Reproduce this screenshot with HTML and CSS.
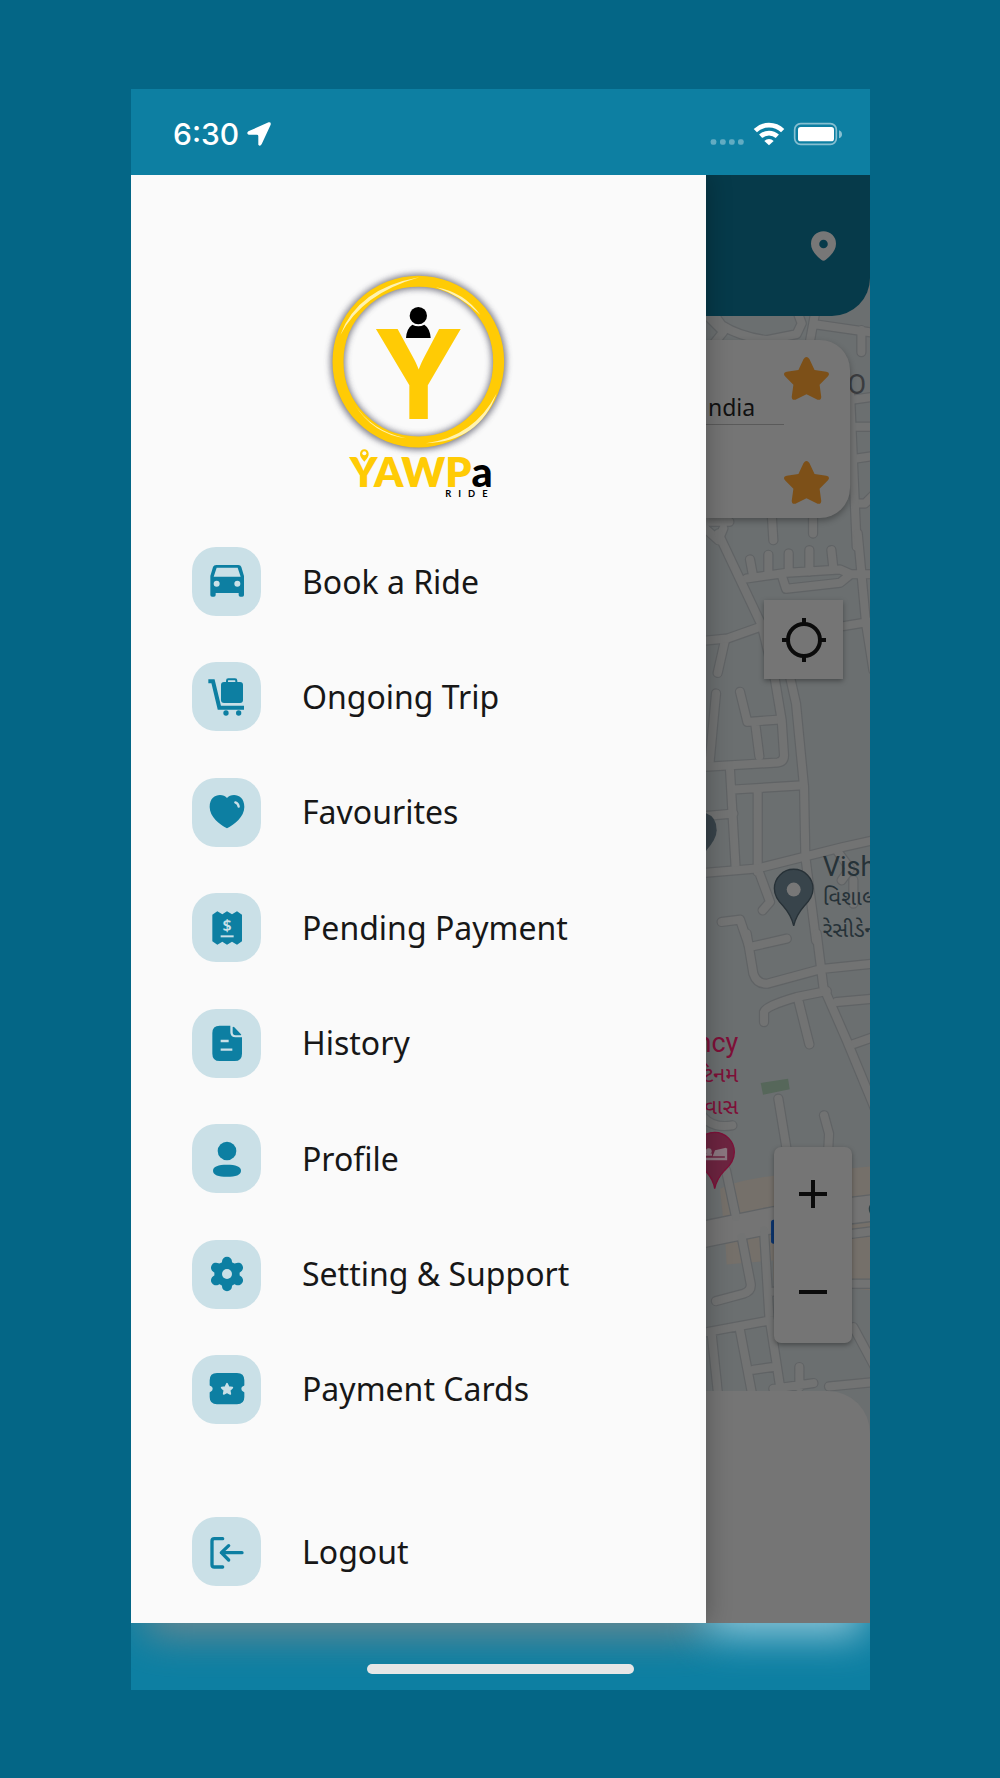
FILE: index.html
```html
<!DOCTYPE html>
<html lang="en">
<head>
  <meta charset="UTF-8">
  <meta name="viewport" content="width=device-width, initial-scale=1">
  <title>YAWPa Ride - Menu</title>
  <link rel="stylesheet" href="styles.css">
</head>
<body>
  <div class="phone">
    <!-- Status bar -->
    <header class="status-bar">
      <span class="time">6:30</span>
      <svg class="location-arrow" viewBox="0 0 70 70"><path d="M63 1 Q71 0 69 8 L43 64 Q38 73 33 66 V41 Q33 37 29 37 H5 Q-3 33 4 27 Z"/></svg>
      <svg class="status-icons" viewBox="0 0 396 72">
        <g opacity=".35">
          <rect x="2" y="52" width="17" height="16" rx="6"/><rect x="30" y="52" width="17" height="16" rx="6"/>
          <rect x="57" y="52" width="17" height="16" rx="6"/><rect x="84" y="52" width="17" height="16" rx="6"/>
        </g>
        <path d="M136 26 A59 59 0 0 1 218 26 M152 43 A37 37 0 0 1 202 43" fill="none" stroke="#fff" stroke-width="14"/>
        <path d="M177 70 L163 57 A20 20 0 0 1 191 57 Z"/>
        <rect x="254" y="5" width="125" height="62" rx="18" fill="none" stroke="#fff" stroke-width="5" opacity=".5"/>
        <rect x="264" y="15" width="108" height="43" rx="8"/>
        <path d="M387 25 Q396 28 396 37 Q396 46 387 49 Z" opacity=".5"/>
      </svg>
    </header>

    <main class="screen">
      <!-- Side menu -->
      <nav class="drawer">
        <svg class="logo" viewBox="9 0 630 750" role="img" aria-label="YAWPa Ride">
          <defs>
            <filter id="soft" x="-20%" y="-20%" width="140%" height="140%"><feGaussianBlur stdDeviation="9"/></filter>
          </defs>
          <circle cx="322" cy="306" r="242" fill="none" stroke="#4a4a58" stroke-width="44" opacity=".7" filter="url(#soft)"/>
          <circle cx="322" cy="305" r="241" fill="none" stroke="#ffcb05" stroke-width="33"/>
          <path d="M88 225 Q140 85 325 52 Q155 100 88 225Z M375 82 Q460 97 508 165 Q450 107 375 82Z M130 432 Q180 512 285 535 Q185 522 130 432Z M345 550 Q490 530 557 400 Q505 545 345 550Z" fill="#fff3b0"/>
          <text class="logo-letter" x="322" y="476">Y</text>
          <circle cx="322" cy="167" r="26"/>
          <path d="M285 234 Q287 205 304 194 Q322 203 340 194 Q357 205 359 234 Z"/>
          <text class="logo-word" x="116" y="682">YAWP<tspan class="logo-dark">a</tspan></text>
          <path d="M160 605 Q146 590 147 581 A13 13 0 0 1 173 581 Q174 590 160 605Z" fill="#ffcb05"/>
          <circle cx="160" cy="580" r="6" fill="#fafafa"/>
          <text class="logo-ride" x="403" y="711">RIDE</text>
        </svg>

        <ul class="menu">
          <li>
            <a class="menu-item" href="#book">
              <span class="tile"><svg viewBox="0 0 120 120"><path fill-rule="evenodd" d="M28 9 H94 Q101 9 103 15 L111 42 V99 Q111 104 106 104 H100 Q95 104 95 99 V93 H26 V99 Q26 104 21 104 H15 Q10 104 10 99 V42 L18 15 Q20 9 28 9Z M29 17 L20 44 H101 L92 17Z M20 65 a9 9 0 1 0 18 0 a9 9 0 1 0 -18 0Z M82 65 a9 9 0 1 0 18 0 a9 9 0 1 0 -18 0Z"/></svg></span>
              Book a Ride
            </a>
          </li>
          <li>
            <a class="menu-item" href="#trip">
              <span class="tile"><svg viewBox="0 0 120 120"><path class="line" stroke-width="12" d="M4 13 H18 L37 92 H111"/><rect x="42" y="15" width="66" height="63" rx="9"/><path class="line" stroke-width="6" d="M60 18 V11 Q60 7 64 7 H84 Q88 7 88 11 V18"/><circle cx="57" cy="108" r="8"/><circle cx="95" cy="108" r="8"/></svg></span>
              Ongoing Trip
            </a>
          </li>
          <li>
            <a class="menu-item" href="#favourites">
              <span class="tile"><svg viewBox="0 0 120 120"><path d="M60 18 C48 3 8 4 8 45 C8 75 38 97 60 109 C82 97 112 75 112 45 C112 4 72 3 60 18Z"/><path class="cut round" stroke-width="7" d="M85 31 Q94 34 95 44"/></svg></span>
              Favourites
            </a>
          </li>
          <li>
            <a class="menu-item" href="#pending">
              <span class="tile"><svg viewBox="0 0 120 120"><path d="M16 20 L31 10 L46 19 L60 10 L75 19 L90 10 L105 20 V100 L90 110 L75 101 L60 110 L46 101 L31 110 L16 100Z"/><text class="dollar" x="60" y="68">$</text><path class="cut" stroke-width="6" d="M41 85 H80"/></svg></span>
              Pending Payment
            </a>
          </li>
          <li>
            <a class="menu-item" href="#history">
              <span class="tile"><svg viewBox="0 0 120 120"><path d="M38 8 H70 V28 Q70 43 86 43 H105 V92 Q105 114 83 114 H38 Q16 114 16 92 V30 Q16 8 38 8Z M77 12 Q79 10 82 13 L102 34 Q104 37 101 37 H86 Q77 37 77 28Z"/><path class="cut" stroke-width="7" d="M41 54 H65 M41 80 H76"/></svg></span>
              History
            </a>
          </li>
          <li>
            <a class="menu-item" href="#profile">
              <span class="tile"><svg viewBox="0 0 120 120"><circle cx="60" cy="36" r="28"/><path d="M18 95 C18 82 34 77 60 77 S102 82 102 95 S86 113 60 113 S18 108 18 95Z"/></svg></span>
              Profile
            </a>
          </li>
          <li>
            <a class="menu-item" href="#settings">
              <span class="tile"><svg viewBox="0 0 120 120"><circle cx="60" cy="60" r="38"/><path class="line round" stroke-width="30" d="M60 23 V97 M27 41 L93 79 M27 79 L93 41"/><circle cx="60" cy="60" r="15" fill="#cae0e7"/></svg></span>
              Setting &amp; Support
            </a>
          </li>
          <li>
            <a class="menu-item" href="#cards">
              <span class="tile"><svg viewBox="0 0 120 120"><path d="M30 12 H90 Q112 12 112 34 V48 Q112 51 109 51 A9 9 0 0 0 109 68 Q112 68 112 71 V84 Q112 106 90 106 H30 Q8 106 8 84 V71 Q8 68 11 68 A9 9 0 0 0 11 51 Q8 51 8 48 V34 Q8 12 30 12Z"/><path d="M60 44 L65 54 L76 56 L68 64 L70 75 L60 70 L50 75 L52 64 L44 56 L55 54Z" fill="#cae0e7" stroke="#cae0e7" stroke-width="5" stroke-linejoin="round"/></svg></span>
              Payment Cards
            </a>
          </li>
        </ul>

        <a class="menu-item logout" href="#logout">
          <span class="tile"><svg viewBox="0 0 120 120"><path class="line round" stroke-width="10" d="M47 20 H22 Q15 20 15 27 V98 Q15 105 22 105 H47 M105 62 H43 M65 41 L43 62 L65 84"/></svg></span>
          Logout
        </a>
      </nav>

      <!-- Dimmed map behind the menu -->
      <section class="backdrop">
        <svg class="map" viewBox="0 0 492 4344" preserveAspectRatio="xMinYMin slice">
          <defs>
            <g id="streets">
              <g transform="translate(-48 -15)">
                <path d="M40 560 L100 485 L40 425 M70 430 L95 465 Q150 500 230 510 L320 492 L335 460 L320 420 M375 430 L355 540 M370 462 L550 488 M514 480 V546 M480 690 L550 680 M490 770 H550 M500 865 L550 858 M495 1000 L525 1000 L550 975 M245 1030 L250 1110 M369 1030 V1090 M40 1070 L85 1110 L100 1075 M50 1055 L118 1055"/>
                <path d="M480 670 L500 1130"/>
              </g>
              <g transform="translate(-48 1095)">
                <path d="M105 300 L83 398 M180 58 L190 112 M235 44 V105 M296 40 V98 M358 30 V95 M424 30 L430 85 M170 115 L290 98 L450 88 L482 102 L450 128 L288 146 L275 105 M482 102 H550 M503 -20 L528 250 L550 390 M460 258 L550 243 M78 460 L58 675 M150 455 L172 545 L270 538 M195 545 L208 648 M120 690 L137 985 M130 748 L340 735 M203 755 L203 995 M40 828 L130 820 M205 990 L240 1085 L218 1110 M95 1145 L150 1138 L178 1220 M440 930 L480 985 L455 1020 M490 1020 V1090"/>
                <path d="M85 -20 L215 255 L255 420 L275 540 L282 645 Q282 665 262 667 L40 680 M40 302 L112 295 L205 262 M300 410 L318 490 L342 740 L346 950 L378 1200 M40 998 L200 985 L460 920 L550 900"/>
              </g>
              <g transform="translate(-48 2295)">
                <path d="M180 20 L290 -5 M222 245 V215 Q225 198 320 170 L410 152 M325 180 L358 312 M440 185 L550 175 M480 315 L550 290 M265 475 L292 640 M402 525 L417 580 L414 640 M40 530 Q70 565 127 555 M108 690 L138 830 M155 890 L182 1030 Q185 1052 160 1060 L78 1082 M222 870 L238 1130 L275 1370 M40 1177 L240 1140 M65 1180 L85 1370 M150 1170 L188 1370 M190 1288 L260 1278 M328 1280 V1340 M250 1345 L370 1328 M417 1338 L550 1325 M488 1030 H550 M488 880 L550 872 M240 1055 L275 1050 M490 1160 L560 1290"/>
                <path d="M170 -20 L190 100 Q200 132 232 130 L395 86 L550 70 M380 -20 L400 140 L470 300 L565 530"/>
              </g>
            </g>
          </defs>
          <g transform="translate(-48 2295)">
            <path d="M90 745 Q140 720 255 705 L545 678 V1050 L250 1020 V960 L110 972 L105 890Z" fill="#75706a"/>
            <path d="M40 882 L255 838 L545 803" fill="none" stroke="#606365" stroke-width="84"/>
          </g>
          <use href="#streets" class="street-edge"/>
          <g transform="translate(-48 2295)"><path d="M40 882 L255 838 L545 803" fill="none" stroke="#747474" stroke-width="76"/></g>
          <use href="#streets" class="street-fill"/>

          <g transform="translate(-48 -15)">
            <text class="place place-grey" x="472" y="673">O</text>
          </g>
          <g transform="translate(-48 1095)">
            <path d="M20 815 Q80 815 80 870 Q80 905 20 960Z" fill="#38434a"/>
            <path d="M311 1157 Q304 1125 280 1098 Q253 1072 253 1045 A58 58 0 0 1 369 1045 Q369 1072 342 1098 Q318 1125 311 1157Z" fill="#38444b" stroke="#273137" stroke-width="4"/>
            <circle cx="311" cy="1048" r="21" fill="#777"/>
            <text class="place place-blue" x="398" y="1007">Vish</text>
            <text class="place-local place-blue" x="398" y="1095">વિશાલ</text>
            <text class="place-local place-blue" x="398" y="1191">રેસીડેન્સી</text>
          </g>
          <g transform="translate(-48 2295)">
            <path d="M212 428 L294 415 L299 447 L219 463Z" fill="#56675a"/>
            <text class="place place-pink" x="145" y="336">ncy</text>
            <text class="place-local place-pink" x="145" y="424">ટિનમ</text>
            <text class="place-local place-pink" x="145" y="522">વાસ</text>
            <path d="M74 745 Q70 715 45 690 Q15 665 15 635 A59 59 0 0 1 133 635 Q133 665 104 690 Q80 715 74 745Z" fill="#6d2440" stroke="#7e1038" stroke-width="4"/>
            <path d="M40 656 H108 V624 M66 643 H40" fill="none" stroke="#8b7780" stroke-width="7"/>
            <path d="M68 648 L75 630 L108 622 V648Z" fill="#8b7780"/>
            <circle cx="56" cy="633" r="9" fill="#8b7780"/>
            <rect x="243" y="838" width="40" height="72" rx="8" fill="#0b3570"/>
            <circle cx="560" cy="806" r="24" fill="#2a4145"/>
          </g>
        </svg>

        <div class="top-bar">
          <svg class="pin" viewBox="0 0 76 90"><path fill-rule="evenodd" d="M38 90 Q35 90 31 87 Q0 62 0 38 A38 38 0 0 1 76 38 Q76 62 45 87 Q41 90 38 90Z M25 39 a13 13 0 1 0 26 0 a13 13 0 1 0 -26 0Z"/></svg>
        </div>

        <div class="places">
          <input class="address" type="text" value="ndia" aria-label="Pickup address">
          <button class="star" aria-label="Save pickup"><svg viewBox="0 0 134 128"><path d="M58 7 Q67 -7 76 7 L91 39 L126 44 Q139 47 131 57 L106 83 L111 119 Q110 130 100 127 L67 111 L34 127 Q24 130 23 119 L28 83 L3 57 Q-5 47 8 44 L43 39Z"/></svg></button>
          <button class="star" aria-label="Save destination"><svg viewBox="0 0 134 128"><path d="M58 7 Q67 -7 76 7 L91 39 L126 44 Q139 47 131 57 L106 83 L111 119 Q110 130 100 127 L67 111 L34 127 Q24 130 23 119 L28 83 L3 57 Q-5 47 8 44 L43 39Z"/></svg></button>
        </div>

        <button class="locate" aria-label="My location">
          <svg viewBox="0 0 132 132"><circle cx="66" cy="66" r="48"/><path d="M66 0 V20 M66 112 V132 M0 66 H20 M112 66 H132"/></svg>
        </button>

        <div class="zoom">
          <button aria-label="Zoom in"><svg viewBox="0 0 28 28"><path d="M0 14 H28 M14 0 V28"/></svg></button>
          <button aria-label="Zoom out"><svg viewBox="0 0 28 28"><path d="M0 14 H28"/></svg></button>
        </div>

        <div class="sheet"></div>
      </section>
    </main>

    <footer class="home-bar">
      <span class="home-indicator"></span>
    </footer>
  </div>
</body>
</html>
```
FILE: styles.css
```css
* {
  box-sizing: border-box;
  margin: 0;
  padding: 0;
}

body {
  font-family: "Noto Sans", "Open Sans", sans-serif;
  background: #046686;
  padding: 89px 130px 88px 131px;
}

button {
  border: none;
  background: none;
  cursor: pointer;
}

svg {
  display: block;
}

.phone {
  min-height: calc(100vh - 177px);
  display: flex;
  flex-direction: column;
  background: #0d7fa2;
}

/* Status bar */
.status-bar {
  height: 86px;
  padding: 4px 28px 0 42px;
  display: flex;
  align-items: center;
  gap: 8px;
  color: #fff;
  fill: #fff;
}

.time {
  font-family: Inter, sans-serif;
  font-size: 30px;
  font-weight: 500;
}

.location-arrow {
  width: 24px;
  height: 24px;
}

.status-icons {
  width: 132px;
  height: 24px;
  margin-left: auto;
}

.screen {
  flex: 1;
  display: flex;
  overflow: hidden;
}

/* Side menu */
.drawer {
  flex: 0 0 77.8%;
  padding: 85px 24px 37px 61px;
  display: flex;
  flex-direction: column;
  background: #fafafa;
  box-shadow: 0 0 24px rgba(0, 0, 0, 0.3);
  z-index: 1;
}

.logo {
  width: 210px;
  height: 250px;
  margin: 0 36px 37px 0;
  align-self: center;
}

.logo-letter {
  font-family: Inter, sans-serif;
  font-size: 372px;
  font-weight: 700;
  text-anchor: middle;
  fill: #ffcb05;
}

.logo-word {
  font-family: Lato, sans-serif;
  font-size: 124px;
  font-weight: 800;
  fill: #ffcb05;
}

.logo-dark {
  font-weight: 900;
  fill: #000;
}

.logo-ride {
  font-family: Lato, sans-serif;
  font-size: 28px;
  font-weight: 700;
  letter-spacing: 21px;
}

.menu {
  flex: 1;
  list-style: none;
  display: flex;
  flex-direction: column;
  justify-content: space-between;
}

.menu-item {
  display: flex;
  align-items: center;
  gap: 41px;
  color: #171717;
  font-size: 32px;
  line-height: 40px;
  text-decoration: none;
}

.logout {
  margin-top: 93px;
}

.tile {
  width: 69px;
  height: 69px;
  display: flex;
  align-items: center;
  justify-content: center;
  border-radius: 24px;
  background: #cae0e7;
}

.tile svg {
  width: 40px;
  height: 40px;
  fill: #0d7fa2;
}

.tile .line {
  fill: none;
  stroke: #0d7fa2;
}

.tile .cut {
  fill: none;
  stroke: #cae0e7;
}

.tile .round {
  stroke-linecap: round;
  stroke-linejoin: round;
}

.dollar {
  font-size: 48px;
  font-weight: 600;
  text-anchor: middle;
  fill: #cae0e7;
}

/* Map */
.backdrop {
  flex: 1;
  min-width: 0;
  position: relative;
  display: flex;
  flex-direction: column;
  align-items: flex-end;
  overflow: hidden;
  background: #6b6f70;
}

.backdrop > * {
  position: relative;
}

.backdrop .map {
  position: absolute;
  inset: 0;
  width: 100%;
  height: 100%;
}

.street-edge,
.street-fill {
  fill: none;
  stroke-linecap: round;
  stroke-linejoin: round;
}

.street-edge {
  stroke: #606365;
  stroke-width: 31px;
}

.street-fill {
  stroke: #727373;
  stroke-width: 24px;
}

.place {
  font-family: Roboto, sans-serif;
  font-size: 81px;
}

.place-local {
  font-family: "Noto Sans Gujarati", "Noto Sans", sans-serif;
  font-size: 66px;
}

.place-grey {
  fill: #3a3c3f;
}

.place-blue {
  fill: #263238;
}

.place-pink {
  fill: #7e1038;
  text-anchor: end;
}

.top-bar {
  width: 100%;
  height: 141px;
  padding-right: 34px;
  display: flex;
  align-items: center;
  justify-content: flex-end;
  background: #063a4a;
  border-bottom-right-radius: 38px;
}

.pin {
  width: 25px;
  height: 30px;
  fill: #777;
}

.places {
  align-self: stretch;
  height: 178px;
  margin: 24px 20px 0 0;
  padding: 17px 21px 14px 0;
  display: grid;
  grid-template-columns: 1fr 45px;
  grid-template-rows: 43px 43px;
  row-gap: 61px;
  background: #757575;
  border-radius: 0 30px 30px 0;
  box-shadow: 0 3px 6px rgba(0, 0, 0, 0.3);
}

.address {
  width: 100%;
  min-width: 0;
  height: 36px;
  margin-top: 32px;
  padding-left: 2px;
  border: none;
  border-bottom: 1px solid #5a5a5a;
  outline: none;
  background: none;
  color: #111;
  font-family: inherit;
  font-size: 23px;
}

.star {
  grid-column: 2;
  fill: #7d5018;
}

.locate {
  width: 79px;
  height: 79px;
  margin: 82px 27px 0 0;
  display: flex;
  align-items: center;
  justify-content: center;
  background: #757575;
  box-shadow: 0 2px 5px rgba(0, 0, 0, 0.35);
}

.locate svg {
  width: 44px;
  height: 44px;
  fill: none;
  stroke: #0b0b0b;
  stroke-width: 12px;
}

.zoom {
  width: 78px;
  margin: 468px 18px 48px 0;
  background: #757575;
  border-radius: 7px;
  box-shadow: 0 2px 5px rgba(0, 0, 0, 0.35);
}

.zoom button {
  width: 100%;
  height: 98px;
  padding-bottom: 4px;
  display: flex;
  align-items: center;
  justify-content: center;
}

.zoom svg {
  width: 28px;
  height: 28px;
  stroke: #0b0b0b;
  stroke-width: 4px;
}

.sheet {
  flex: 1;
  width: 100%;
  background: #757575;
  border-top-right-radius: 42px;
}

/* Home indicator area */
.home-bar {
  height: 67px;
  padding-top: 41px;
  position: relative;
  overflow: hidden;
}

.home-bar::before,
.home-bar::after {
  content: "";
  position: absolute;
  top: -60px;
  height: 72px;
  filter: blur(20px);
  opacity: 0.8;
}

.home-bar::before {
  left: 2%;
  width: 76%;
  background: #848b8c;
}

.home-bar::after {
  left: 78%;
  width: 21%;
  background: #b4dbe8;
}

.home-indicator {
  display: block;
  width: 36%;
  height: 10px;
  margin: 0 auto;
  position: relative;
  z-index: 1;
  border-radius: 5px;
  background: #e6e6e6;
}
```
